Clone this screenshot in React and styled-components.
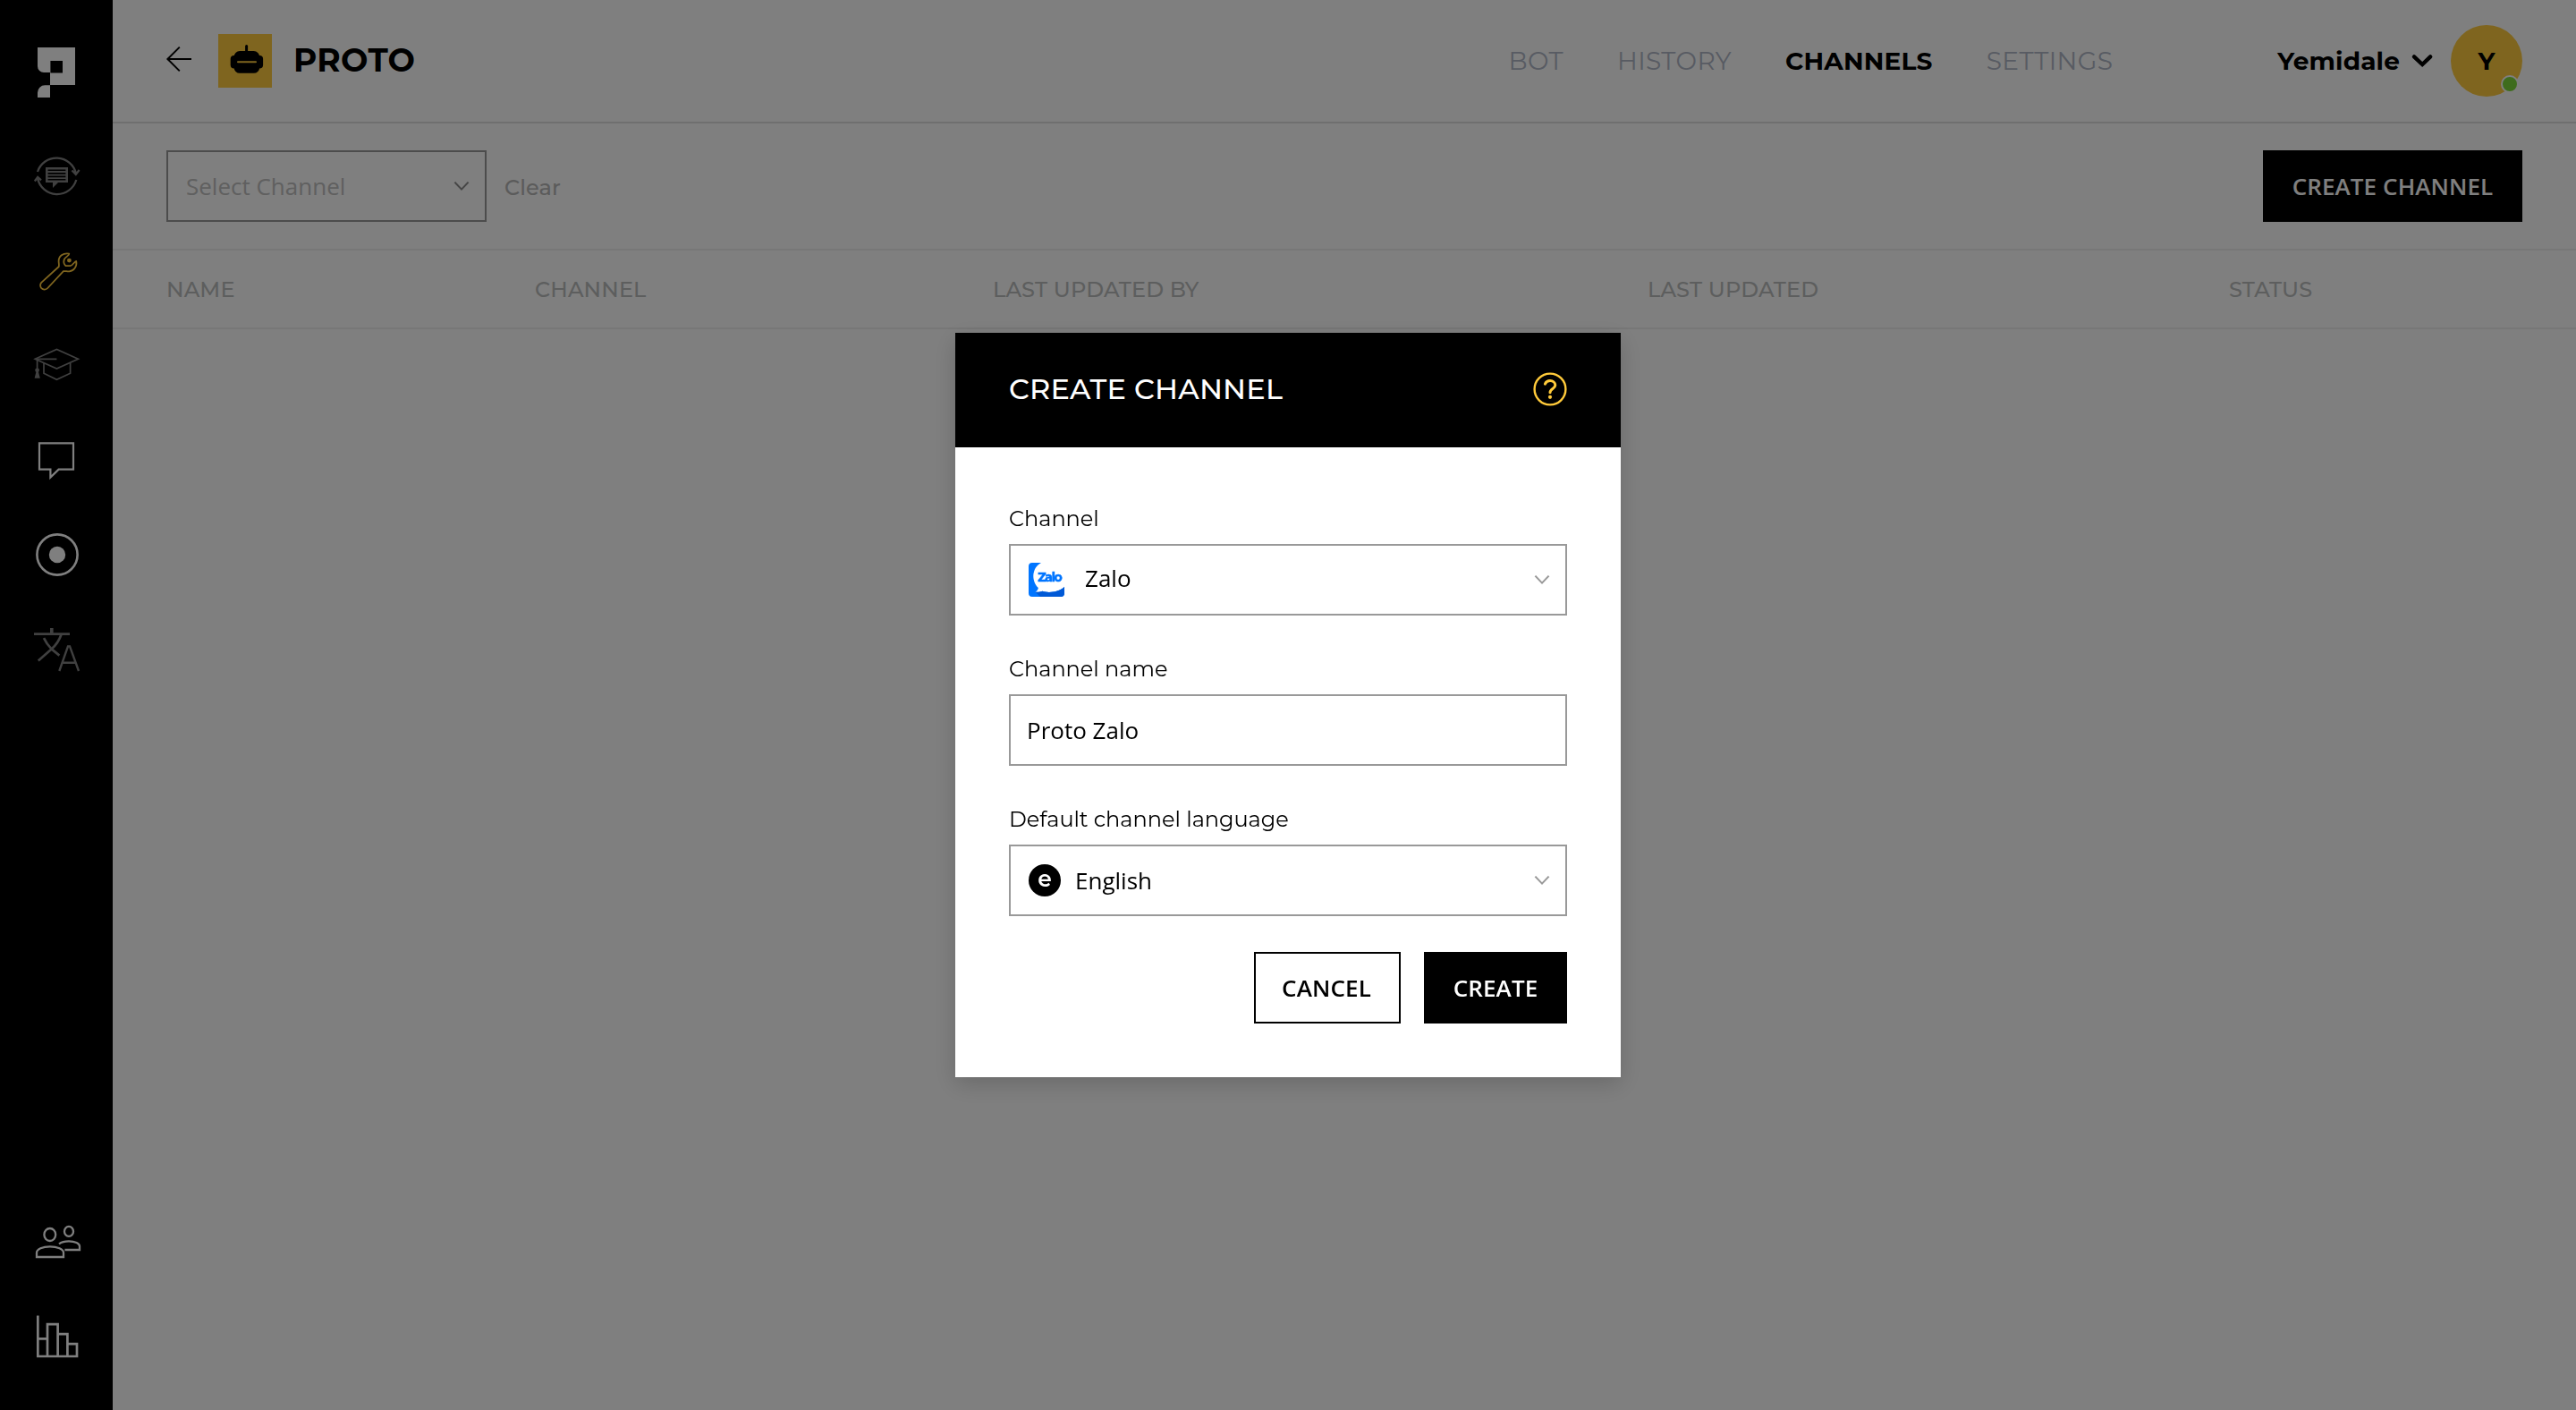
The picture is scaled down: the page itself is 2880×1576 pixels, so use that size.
import React, { useState } from 'react';
import styled, { createGlobalStyle } from 'styled-components';

const GlobalStyle = createGlobalStyle`
  * {
    box-sizing: border-box;
  }
  body {
    margin: 0;
    background: #fff;
    color: #000;
    font-family: Montserrat, Inter, sans-serif;
  }
  svg {
    display: block;
    flex: none;
    overflow: visible;
  }
`

const ProtoLogo = () => (
  <svg width="42" height="56" viewBox="0 0 42 56" fill="#fff">
    <path fillRule="evenodd" d="M0 0H42V42H14V28H7A7 7 0 0 1 0 21ZM14.4 15V28.6H28V15Z"/>
    <path d="M14 42.3V56H0V50.5A8.2 8.2 0 0 1 8.2 42.3Z"/>
  </svg>
)

const ChatSyncIcon = () => (
  <MenuSvg viewBox="0 0 54 54" strokeWidth="2.3">
    <path d="M6 23A22.3 22.3 0 0 1 49 25M44.5 21.5L48.8 26l3.8-5"/>
    <path d="M49.3 32A22.3 22.3 0 0 1 6 30M2.8 33.5L6.2 29l3.8 3.3"/>
    <path strokeWidth="2.6" d="M16.3 19.3H38.7V33.7H16.3Z"/>
    <path strokeWidth="1.8" d="M17 23H38M17 26.6H38M17 30.2H38"/>
    <path fill="currentColor" stroke="none" d="M23 34V41L30 34Z"/>
  </MenuSvg>
)

const WrenchIcon = () => (
  <MenuSvg viewBox="0 0 54 54" strokeWidth="1.8" strokeLinejoin="round">
    <path d="M41.3 8.6C34.5 7.4 29.3 11.5 29.6 17.4C29.7 19.4 30.2 21 29.8 23L10.2 40.8C8.6 42.6 8.8 45.6 10.3 47.2C12.3 49.2 15.6 48.8 17.3 47L34.9 28.2C37 27.6 38.6 28.6 41.5 28.4C46.8 27.6 50.4 22.6 49.2 16.9C47.4 17 45.6 21.6 42.6 22.2H37.6C35.2 20.2 35 17 35.9 14.6C37.4 12 41.4 10.6 41.3 8.6Z"/>
    <circle cx="41.4" cy="16.1" r="2.4" fill="currentColor" stroke="none"/>
  </MenuSvg>
)

const GraduationIcon = () => (
  <MenuSvg viewBox="0 0 54 54" strokeWidth="1.7">
    <path d="M3.2 20.3L27.4 9.4L51.4 20.3L27.4 31Z"/>
    <path d="M13 25V36.3L27.4 43.3L42.6 36.3V25M27.4 20.4H5.6V32"/>
    <circle cx="5.6" cy="32.8" r="2.4" fill="currentColor" stroke="none"/>
    <path fill="currentColor" stroke="none" d="M4.6 34H6.8L8.8 41.8H2.6Z"/>
  </MenuSvg>
)

const MessageIcon = () => (
  <MenuSvg viewBox="0 0 54 54" strokeWidth="2.2">
    <path d="M8 8.4H46V37.6H29.6L20.4 46.6V37.6H8Z"/>
  </MenuSvg>
)

const RecordIcon = () => (
  <MenuSvg viewBox="0 0 54 54" strokeWidth="2.6">
    <circle cx="28" cy="27" r="22.6"/>
    <circle cx="28" cy="27" r="9.2" fill="currentColor" stroke="none"/>
  </MenuSvg>
)

const TranslateIcon = () => (
  <MenuSvg viewBox="0 0 54 54" strokeWidth="2.7">
    <path d="M2 9.6H42"/>
    <path strokeWidth="3.6" d="M21.8 3V9.6"/>
    <path d="M32.4 10.5C30 17.5 26 22.5 21.6 26.6L6.8 39.4M13 14.2C15.5 19.5 18 22.8 21.6 26.4L30.4 33.6"/>
    <path strokeWidth="2.4" d="M30.3 51L40 23.4H42L52 51M34.6 41.8H47.8"/>
  </MenuSvg>
)

const UsersIcon = () => (
  <MenuSvg viewBox="0 0 54 54" strokeWidth="2.3">
    <ellipse cx="19.8" cy="19" rx="6.4" ry="7"/>
    <path d="M5 44V39.2C5 35.4 11.6 32.3 19.9 32.3S35 35.4 35 39.2V44Z"/>
    <ellipse cx="41" cy="15.4" rx="5" ry="5.5"/>
    <path d="M30 29.4C32.6 27.4 36.6 26.4 41 26.4C48 26.4 53 29 53 32V36H36.4"/>
  </MenuSvg>
)

const ChartIcon = () => (
  <MenuSvg viewBox="0 0 54 54" strokeWidth="2.7">
    <path d="M6.3 3.6V49H50V35.2H39.4M6.3 29.4H17M17 49V13.2H28.6V49M28.6 24.2H39.4V49"/>
  </MenuSvg>
)

const BotIcon = () => (
  <svg width="60" height="60" viewBox="0 0 60 60">
    <path stroke="#000" strokeWidth="3" strokeLinecap="round" d="M31.6 13.6V22"/>
    <rect x="17.6" y="19" width="28.6" height="24.8" rx="6.5"/>
    <rect x="13.7" y="24" width="36.4" height="14.6" rx="4"/>
    <path stroke="#ffca3e" strokeWidth="2" strokeLinecap="round" d="M22 31.2H42"/>
  </svg>
)

const BackIcon = () => (
  <svg width="28" height="28" viewBox="0 0 28 28" fill="none" stroke="#000" strokeWidth="2">
    <path d="M28 14H1.2M14.8 .6L1.4 14L14.8 27.4"/>
  </svg>
)

const ChevronIcon = ({ color = '#999' }) => (
  <svg width="18" height="12" viewBox="0 0 18 12" fill="none" stroke={color} strokeWidth="2.1">
    <path d="M1.4 1.6L9 9.6L16.6 1.6"/>
  </svg>
)

const UserChevron = () => (
  <svg width="24" height="16" viewBox="0 0 24 16" fill="none" stroke="#000" strokeWidth="4.4">
    <path strokeLinecap="round" d="M3 3.4L12.2 12L21.2 3.4"/>
  </svg>
)

const HelpIcon = () => (
  <svg width="38" height="38" viewBox="0 0 38 38" fill="none" stroke="#ffca3a" strokeWidth="2.4">
    <circle cx="19" cy="19" r="17.4"/>
    <path strokeWidth="3" strokeLinecap="round" d="M13.4 13.2C14.4 10.6 16.6 9.6 19 9.6C22.4 9.6 24.8 11.8 24.8 14.6C24.8 18.6 19 18.6 19 22.8"/>
    <circle cx="19" cy="27.8" r="2.1" fill="#ffca3a" stroke="none"/>
  </svg>
)

const ZaloLogo = () => (
  <svg width="40" height="38" viewBox="0 0 40 38">
    <path fill="#0075ff" d="M14 0H4A4 4 0 0 0 0 4V34A4 4 0 0 0 4 38H36A4 4 0 0 0 40 34V27C33 33.2 22 34 15.4 31.8C12.4 33 10 33 7.5 32.7C9.6 31.4 10.8 29.6 10.8 28C2.6 20 3.6 5.6 14 0Z"/>
    <path fill="#0059d6" d="M7.5 32.7C10 33 12.4 33 15.4 31.8C22 34 33 33.2 40 27V34A4 4 0 0 1 36 38H13Z"/>
    <text x="10.2" y="21" fill="#0075ff" stroke="#0075ff" strokeWidth=".5" fontFamily="Montserrat, Inter, sans-serif" fontWeight="700" fontSize="14" letterSpacing="-1.3">Zalo</text>
  </svg>
)

const mainMenu = [
  { id: 'inbox', icon: ChatSyncIcon, color: '#808080' },
  { id: 'build', icon: WrenchIcon, color: '#ffca3e' },
  { id: 'train', icon: GraduationIcon, color: '#808080' },
  { id: 'chat', icon: MessageIcon, color: '#fff' },
  { id: 'record', icon: RecordIcon, color: '#fff' },
  { id: 'translate', icon: TranslateIcon, color: '#808080' },
];

const bottomMenu = [
  { id: 'users', icon: UsersIcon, color: '#fff' },
  { id: 'stats', icon: ChartIcon, color: '#fff' },
];

const tabs = ['BOT', 'HISTORY', 'CHANNELS', 'SETTINGS'];
const columns = ['NAME', 'CHANNEL', 'LAST UPDATED BY', 'LAST UPDATED', 'STATUS'];

function Sidebar() {
  const renderItem = ({ id, icon: Icon, color }) => (
    <MenuItem key={id} color={color}><Icon/></MenuItem>
  );

  return (
    <Aside>
      <LogoLink><ProtoLogo/></LogoLink>
      {mainMenu.map(renderItem)}
      <Spacer/>
      {bottomMenu.map(renderItem)}
    </Aside>
  )
}

function Header() {
  return (
    <HeaderBar>
      <BackLink><BackIcon/></BackLink>
      <BotBadge><BotIcon/></BotBadge>
      <BotName>PROTO</BotName>
      <Nav>
        {tabs.map(tab => <Tab key={tab} $active={tab === 'CHANNELS'}>{tab}</Tab>)}
      </Nav>
      <UserName>Yemidale</UserName>
      <UserChevron/>
      <Avatar>Y<OnlineDot/></Avatar>
    </HeaderBar>
  )
}

function CreateChannel() {
  const [name, setName] = useState('Proto Zalo');

  return (
    <Overlay>
      <Modal>
        <ModalHeader>
          <ModalTitle>CREATE CHANNEL</ModalTitle>
          <HelpIcon/>
        </ModalHeader>
        <Form>
          <Field>
            <Label>Channel</Label>
            <Select>
              <ZaloLogo/>
              <ChannelOption>Zalo</ChannelOption>
              <ChevronIcon/>
            </Select>
          </Field>
          <Field>
            <Label>Channel name</Label>
            <Input value={name} onChange={(evt) => setName(evt.target.value)}/>
          </Field>
          <Field>
            <Label>Default channel language</Label>
            <Select>
              <LangBadge>e</LangBadge>
              <LangOption>English</LangOption>
              <ChevronIcon/>
            </Select>
          </Field>
          <Actions>
            <OutlineButton width="164px">CANCEL</OutlineButton>
            <Button width="160px">CREATE</Button>
          </Actions>
        </Form>
      </Modal>
    </Overlay>
  )
}

function App() {
  return (
    <>
    <GlobalStyle/>
    <Layout>
      <Sidebar/>
      <Content>
        <Header/>
        <FilterBar>
          <ChannelFilter>
            <Placeholder>Select Channel</Placeholder>
            <ChevronIcon color="#8c8c8c"/>
          </ChannelFilter>
          <ClearLink>Clear</ClearLink>
          <Button width="290px">CREATE CHANNEL</Button>
        </FilterBar>
        <TableHead>
          {columns.map(col => <span key={col}>{col}</span>)}
        </TableHead>
      </Content>
    </Layout>
    <CreateChannel/>
    </>
  )
}

const MenuSvg = styled.svg`
  width: 54px;
  height: 54px;
  fill: none;
  stroke: currentColor;
`

const Layout = styled.div`
  display: flex;
  height: 100vh;
`

const Aside = styled.aside`
  width: 126px;
  padding: 53px 0 29px;
  background: #000;
  display: flex;
  flex-direction: column;
  align-items: center;
  flex: none;
`

const LogoLink = styled.a`
  margin-bottom: 34px;
`

const MenuItem = styled.a`
  height: 106px;
  display: flex;
  align-items: center;
  color: ${ props => props.color };
`

const Spacer = styled.div`
  flex: 1;
`

const Content = styled.main`
  flex: 1;
  display: flex;
  flex-direction: column;
`

const HeaderBar = styled.header`
  height: 138px;
  padding: 0 60px;
  border-bottom: 2px solid #dedede;
  display: flex;
  align-items: center;
`

const BackLink = styled.a`
  padding-bottom: 4px;
  margin-right: 30px;
`

const BotBadge = styled.div`
  background: #ffca3e;
  margin-right: 24px;
`

const BotName = styled.h1`
  margin: 0;
  padding-bottom: 2px;
  font-size: 36px;
  font-weight: 700;
  letter-spacing: 0.3px;
`

const Nav = styled.nav`
  display: flex;
  gap: 60px;
  margin-left: auto;
  margin-right: 184px;
`

const Tab = styled.a`
  font-size: 28px;
  font-weight: ${ props => props.$active ? 700 : 400 };
  letter-spacing: ${ props => props.$active ? '0.2px' : '0.4px' };
  color: ${ props => props.$active ? '#000' : '#b0b7c6' };
`

const UserName = styled.div`
  font-size: 28px;
  font-weight: 700;
  letter-spacing: 0.15px;
  margin-right: 13px;
`

const Avatar = styled.div`
  position: relative;
  width: 80px;
  height: 80px;
  margin-left: 20px;
  border-radius: 50%;
  background: #ffca3e;
  display: flex;
  align-items: center;
  justify-content: center;
  font-size: 28px;
  font-weight: 700;
`

const OnlineDot = styled.span`
  position: absolute;
  right: 4px;
  bottom: 4px;
  width: 20px;
  height: 20px;
  border: 2px solid #fff;
  border-radius: 50%;
  background: #7cd93a;
`

const FilterBar = styled.div`
  height: 142px;
  padding: 0 60px;
  border-bottom: 2px solid #eee;
  display: flex;
  align-items: center;
`

const Select = styled.div`
  height: 80px;
  padding: 0 17px 0 20px;
  border: 2px solid #999;
  background: #fff;
  display: flex;
  align-items: center;
  font-family: 'Open Sans', sans-serif;
  font-size: 26px;
`

const ChannelFilter = styled(Select)`
  width: 358px;
`

const Placeholder = styled.span`
  flex: 1;
  color: #c0c0c0;
`

const ClearLink = styled.a`
  margin: 3px auto 0 20px;
  font-size: 24px;
  font-weight: 500;
  letter-spacing: 0.1px;
  color: #b6b6b6;
`

const Button = styled.button`
  width: ${ props => props.width };
  height: 80px;
  padding: 0;
  border: 2px solid #000;
  background: #000;
  color: #fff;
  font-family: 'Open Sans', sans-serif;
  font-size: 26px;
  font-weight: 600;
  letter-spacing: 0.1px;
  cursor: pointer;
`

const OutlineButton = styled(Button)`
  padding-right: 2px;
  background: #fff;
  color: #000;
`

const TableHead = styled.div`
  height: 88px;
  padding-left: 60px;
  border-bottom: 2px solid #eee;
  display: grid;
  grid-template-columns: 412px 512px 732px 650px 1fr;
  align-items: center;
  font-size: 24px;
  font-weight: 500;
  letter-spacing: 0.15px;
  color: #babdbd;
`

const Overlay = styled.div`
  position: fixed;
  inset: 0;
  background: rgba(0, 0, 0, 0.5);
  display: flex;
  align-items: center;
  justify-content: center;
`

const Modal = styled.section`
  width: 744px;
  background: #fff;
  box-shadow: 0 8px 24px rgba(0, 0, 0, 0.17);
`

const ModalHeader = styled.div`
  height: 128px;
  padding: 0 60px 2px;
  background: #000;
  display: flex;
  align-items: center;
  justify-content: space-between;
`

const ModalTitle = styled.h2`
  margin: 0;
  padding-bottom: 2px;
  color: #fff;
  font-size: 32px;
  font-weight: 500;
  letter-spacing: 0.2px;
`

const Form = styled.div`
  padding: 65px 60px 60px;
  display: flex;
  flex-direction: column;
  gap: 45px;
`

const Field = styled.div`
  display: flex;
  flex-direction: column;
  gap: 13px;
`

const Label = styled.label`
  font-size: 24px;
  line-height: 30px;
`

const Input = styled.input`
  width: 100%;
  height: 80px;
  padding: 0 18px;
  border: 2px solid #999;
  border-radius: 0;
  outline: none;
  color: #000;
  font-family: 'Open Sans', sans-serif;
  font-size: 26px;
`

const ChannelOption = styled.span`
  flex: 1;
  margin-left: 23px;
  padding-bottom: 4px;
`

const LangBadge = styled.span`
  width: 36px;
  height: 36px;
  padding-bottom: 5px;
  border-radius: 50%;
  background: #000;
  color: #fff;
  display: flex;
  align-items: center;
  justify-content: center;
  font-family: Montserrat, Inter, sans-serif;
  font-size: 25px;
  font-weight: 600;
`

const LangOption = styled.span`
  flex: 1;
  margin-left: 16px;
`

const Actions = styled.div`
  margin-top: -5px;
  display: flex;
  justify-content: flex-end;
  gap: 26px;
`

export default App;
